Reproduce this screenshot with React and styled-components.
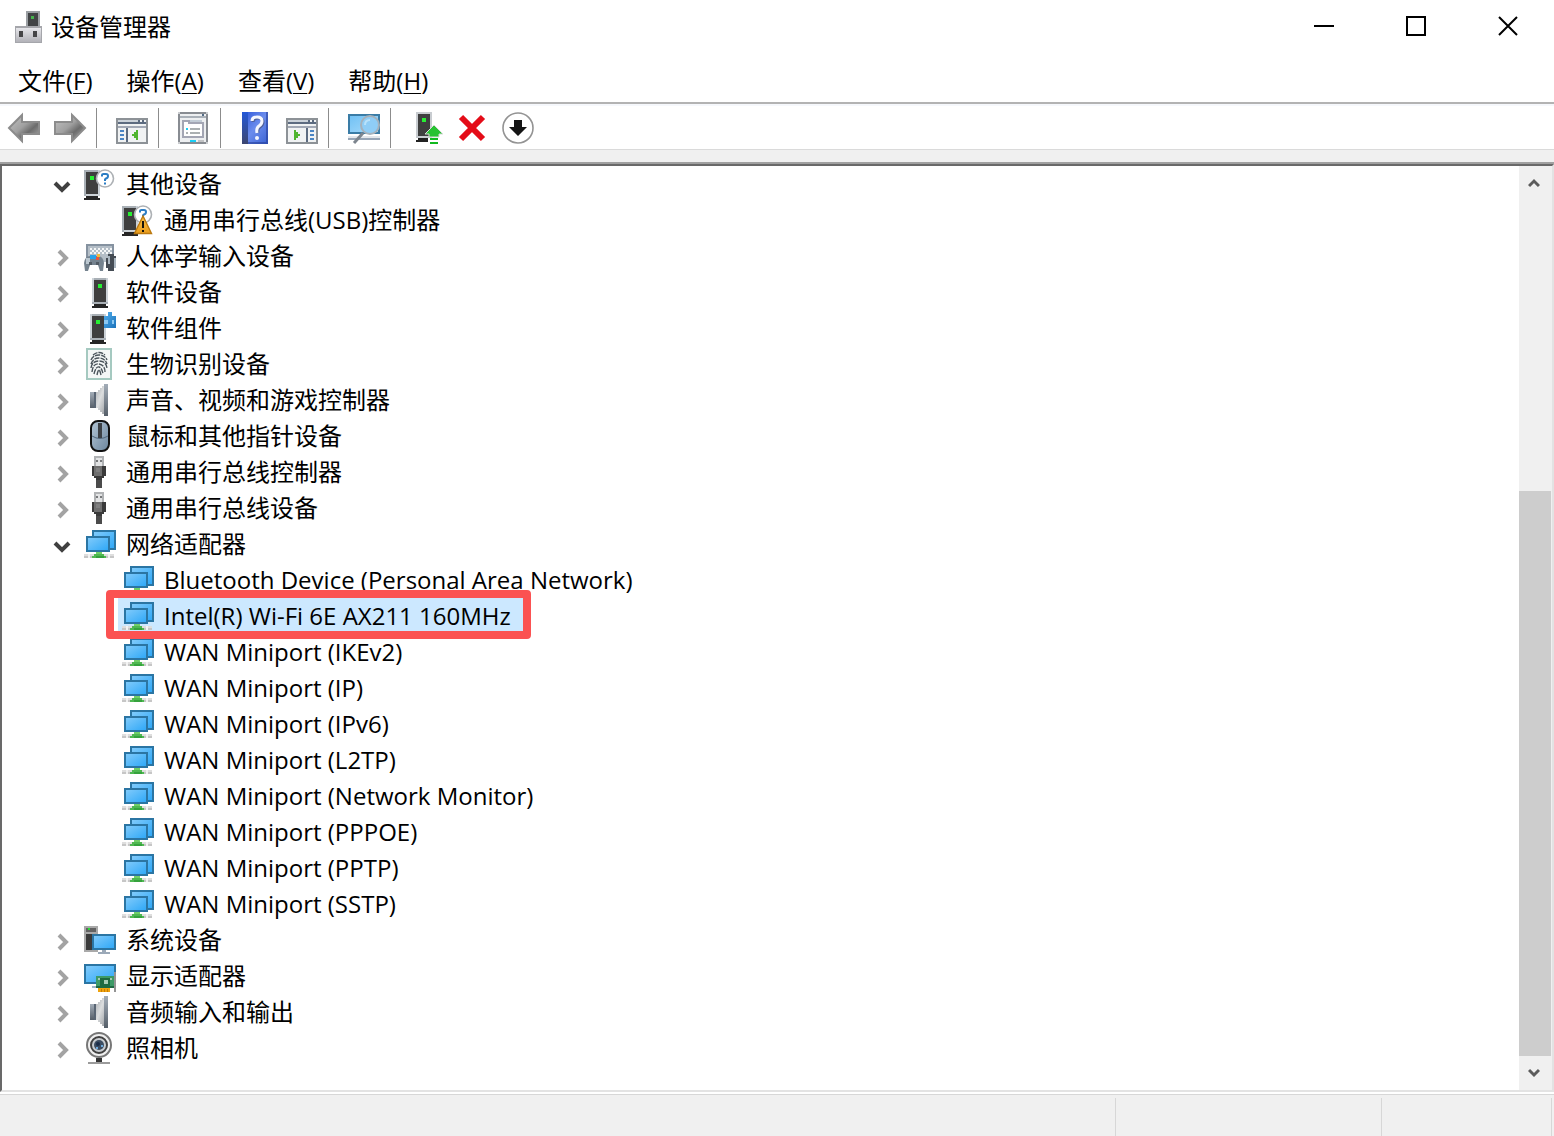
import React, { useState } from "react";
import styled, { createGlobalStyle } from "styled-components";

const GlobalStyle = createGlobalStyle`
  * {
    box-sizing: border-box;
  }
  body {
    margin: 0;
    background: #fff;
    color: #000;
    font-family: "Open Sans", "Noto Sans CJK SC", sans-serif;
    font-size: 24px;
    line-height: 36px;
  }
  button {
    font: inherit;
    color: inherit;
    background: none;
    border: none;
    padding: 0;
    margin: 0;
  }
`;

const menus = [
  { text: "文件", hotkey: "F" },
  { text: "操作", hotkey: "A" },
  { text: "查看", hotkey: "V" },
  { text: "帮助", hotkey: "H" },
];

const wanPorts = ["IKEv2", "IP", "IPv6", "L2TP", "Network Monitor", "PPPOE", "PPTP", "SSTP"];

const devices = [
  {
    name: "其他设备",
    icon: "other",
    open: true,
    children: [{ name: "通用串行总线(USB)控制器", icon: "warning" }],
  },
  { name: "人体学输入设备", icon: "hid" },
  { name: "软件设备", icon: "software" },
  { name: "软件组件", icon: "component" },
  { name: "生物识别设备", icon: "biometric" },
  { name: "声音、视频和游戏控制器", icon: "speaker" },
  { name: "鼠标和其他指针设备", icon: "mouse" },
  { name: "通用串行总线控制器", icon: "usb" },
  { name: "通用串行总线设备", icon: "usb" },
  {
    name: "网络适配器",
    icon: "network",
    open: true,
    children: [
      { name: "Bluetooth Device (Personal Area Network)", icon: "network" },
      { name: "Intel(R) Wi-Fi 6E AX211 160MHz", icon: "network", marked: true },
      ...wanPorts.map((port) => ({ name: `WAN Miniport (${port})`, icon: "network" })),
    ],
  },
  { name: "系统设备", icon: "system" },
  { name: "显示适配器", icon: "display" },
  { name: "音频输入和输出", icon: "speaker" },
  { name: "照相机", icon: "camera" },
];

const Gradients = () => (
  <Defs aria-hidden="true">
    <defs>
      <linearGradient id="screen" x1="0" y1="0" x2="1" y2="1">
        <stop offset="0" stopColor="#84ccfb" />
        <stop offset="1" stopColor="#2ba6f7" />
      </linearGradient>
      <linearGradient id="paleScreen" x1="0" y1="0" x2="1" y2="1">
        <stop offset="0" stopColor="#6fc0f4" />
        <stop offset="1" stopColor="#a9dcfb" />
      </linearGradient>
      <linearGradient id="arrow" x1="0" y1="0" x2="1" y2="1">
        <stop offset="0" stopColor="#c4c4c4" />
        <stop offset="0.45" stopColor="#a0a0a0" />
        <stop offset="0.65" stopColor="#6c6c6c" />
        <stop offset="1" stopColor="#b4b4b4" />
      </linearGradient>
      <linearGradient id="book" x1="0" y1="0" x2="1" y2="1">
        <stop offset="0" stopColor="#2c55d8" />
        <stop offset="0.5" stopColor="#6b8ced" />
        <stop offset="1" stopColor="#3a62d2" />
      </linearGradient>
      <linearGradient id="spine" x1="0" y1="0" x2="0" y2="1">
        <stop offset="0" stopColor="#2458d8" />
        <stop offset="1" stopColor="#3c4670" />
      </linearGradient>
      <linearGradient id="cone" x1="0" y1="0" x2="1" y2="1">
        <stop offset="0" stopColor="#a9adb1" />
        <stop offset="0.4" stopColor="#dcdedf" />
        <stop offset="0.7" stopColor="#b3b6b9" />
        <stop offset="1" stopColor="#777c82" />
      </linearGradient>
      <linearGradient id="rim" x1="0" y1="0" x2="0" y2="1">
        <stop offset="0" stopColor="#a3adb8" />
        <stop offset="1" stopColor="#565f69" />
      </linearGradient>
      <linearGradient id="shell" x1="0" y1="0" x2="1" y2="1">
        <stop offset="0" stopColor="#b4c6d6" />
        <stop offset="1" stopColor="#6b859d" />
      </linearGradient>
      <linearGradient id="case" x1="0" y1="0" x2="0" y2="1">
        <stop offset="0" stopColor="#e6e6ea" />
        <stop offset="1" stopColor="#b2b2b8" />
      </linearGradient>
      <linearGradient id="puzzle" x1="0" y1="0" x2="1" y2="1">
        <stop offset="0" stopColor="#52b0ee" />
        <stop offset="1" stopColor="#1c72ba" />
      </linearGradient>
      <linearGradient id="warn" x1="0" y1="0" x2="0" y2="1">
        <stop offset="0" stopColor="#f9c04a" />
        <stop offset="1" stopColor="#e99c1c" />
      </linearGradient>
    </defs>
  </Defs>
);

const Tower = ({ x }) => (
  <g transform={`translate(${x} 0)`} shapeRendering="crispEdges">
    <path fill="#ccd2d7" d="M0 2h16v26H0z" />
    <path fill="#a9b0b6" d="M2 2h12v2H2zM0 26h16v2H0z" />
    <path fill="#3f3f3f" d="M2 4h12v22H2z" />
    <path fill="#27ef33" d="M6 8h4v4H6z" />
    <path fill="#262626" d="M2 28h12v2H2zM0 30h16v2H0z" />
  </g>
);

const OtherTower = () => (
  <g shapeRendering="crispEdges">
    <path fill="#ccd2d7" d="M0 2h16v26H0z" />
    <path fill="#a9b0b6" d="M0 2h14v2H2v24H0z" />
    <path fill="#3f3f3f" d="M2 4h12v22H2z" />
    <path fill="#27ef33" d="M6 8h4v4H6z" />
    <path fill="#262626" d="M2 28h12v2H2zM0 30h16v2H0z" />
  </g>
);

const QuestionBadge = () => (
  <>
    <circle cx="21" cy="10.5" r="8.5" fill="#fff" stroke="#adb1b5" strokeWidth="1.6" />
    <path d="M18 8.5V7Q18 6 19.5 6H22Q24 6 24 8T22 10.5L21 11.5V13" fill="none" stroke="#2b7dc4" strokeWidth="2" />
    <path fill="#2b7dc4" d="M20 14.5h2v2h-2z" />
  </>
);

const Speaker = () => (
  <g shapeRendering="crispEdges">
    <path fill="url(#rim)" d="M6 8h6v16H6z" />
    <path fill="url(#cone)" d="M12 8h2V6h2V4h2V2h2V0h4v32h-4v-2h-2v-2h-2v-2h-2v-2h-2z" />
    <path fill="url(#rim)" d="M20 0h4v32h-4z" />
    <path fill="#5a6674" d="M10 8h2v16h-2z" />
  </g>
);

const UsbPlug = () => (
  <g shapeRendering="crispEdges">
    <path fill="#b0b2b4" d="M10 0h10v10H10z" />
    <path fill="#e2e3e4" d="M12 2h6v8h-6z" />
    <path fill="#77797b" d="M12 4h2v2h-2zM16 4h2v2h-2z" />
    <path fill="#3a3a3a" d="M8 10h14v10h-2v2h-2v2h-6v-2h-2v-2H8z" />
    <path fill="#6f6f6f" d="M10 10h8v10h-8z" />
    <path fill="#808080" d="M12 12h4v4h-4z" />
    <path fill="#4b4b4b" d="M12 24h6v8h-6z" />
  </g>
);

const deviceIcons = {
  other: (
    <>
      <OtherTower />
      <QuestionBadge />
    </>
  ),
  warning: (
    <>
      <OtherTower />
      <QuestionBadge />
      <path fill="url(#warn)" stroke="#bb7910" strokeWidth="1.4" d="M21 12L29.5 29.5H12.5z" />
      <path fill="#16120a" d="M20 17h2v7h-2zM20 26h2v2h-2z" />
    </>
  ),
  hid: (
    <>
      <path fill="#b4bec7" d="M2 4h28v18H2z" />
      <path fill="#8592a0" d="M2 4h28v2H2zM2 4h2v14H2zM28 4h2v12h-2z" />
      <path stroke="#f4f6f7" strokeWidth="2" strokeDasharray="2 2" d="M6 9H28M8 11H28M6 13H28" />
      <path fill="#75838f" d="M1 31L0 23Q1 16 6 16H14Q19 16 20 23L19 31H16L14 25H6L4 31z" />
      <path fill="#bcc8d1" d="M2 18h4v6H2z" />
      <path fill="#2aa2ea" d="M6 15h6v4H6z" />
      <path fill="#eb543d" d="M12 17h3v3h-3z" />
      <path fill="#f2b93b" d="M13 14h3v3h-3z" />
      <path fill="#515b64" d="M5 22h3v3H5zM12 22h3v3h-3z" />
      <path fill="#454c54" d="M22 18h2v-4h6v2h2v12h-2v3h-6v-3h-2z" />
      <path fill="#a9b5bf" d="M24 16h2v8h-2zM30 18h2v10h-2z" />
    </>
  ),
  software: <Tower x={8} />,
  component: (
    <g shapeRendering="crispEdges">
      <Tower x={6} />
      <path fill="url(#puzzle)" d="M20 4h4V0h4v4h4v12H20z" />
      <path fill="#8cc8f2" d="M20 8h4v4h-4zM28 8h2v4h-2z" />
    </g>
  ),
  biometric: (
    <>
      <path fill="#a5c9c0" d="M2 0h26v32H2z" />
      <path fill="#f5f7f7" d="M4 2h22v28H4z" />
      <g fill="none" stroke="#4b545c" strokeWidth="1.4" strokeDasharray="5 1">
        <path d="M9 7Q15 2 21 7M7 12Q9 7 15 7T23 12M7 16Q9 10 15 10T23 16M7 20Q8 13 15 13T23 20" />
        <path d="M8 24Q9 15 15 16T21 24M10 26Q12 18 15 19T19 26M13 27Q14 22 15 22T17 27" />
      </g>
    </>
  ),
  speaker: <Speaker />,
  mouse: (
    <>
      <rect x="7" y="1" width="18" height="30" rx="7" fill="url(#shell)" stroke="#111" strokeWidth="2" />
      <path stroke="#50667b" d="M8 16Q16 21 24 16" fill="none" />
      <path fill="#3c4045" d="M14 3h4v15h-4z" />
    </>
  ),
  usb: <UsbPlug />,
  network: (
    <g shapeRendering="crispEdges">
      <path fill="url(#screen)" stroke="#2b75a3" strokeWidth="2" d="M9 3H31V21H9z" />
      <path fill="url(#screen)" stroke="#2b75a3" strokeWidth="2" d="M3 9H25V23H3z" />
      <path fill="#dedede" d="M0 26h30v2H0z" />
      <path fill="#c6c6c6" d="M0 28h30v2H0z" />
      <path fill="#f2f2f2" d="M4 26h2v4H4zM24 26h2v4h-2z" />
      <path fill="#72cf68" d="M12 24h6v2h-6z" />
      <path fill="#4fb851" d="M10 26h10v2H10zM8 28h14v2H8z" />
      <path fill="#36a23d" d="M12 28h8v2h-8z" />
    </g>
  ),
  system: (
    <g shapeRendering="crispEdges">
      <path fill="#a9a9a9" d="M0 2h14v26H0z" />
      <path fill="#3a3a3a" d="M2 10h6v16H2z" />
      <path fill="#626262" d="M2 4h10v4H2z" />
      <path fill="#27dc33" d="M4 4h2v2H4z" />
      <path fill="url(#screen)" stroke="#2b75a3" strokeWidth="2" d="M9 11H31V25H9z" />
      <path fill="#9ba9b8" d="M18 26h4v2h-4zM14 28h12v2H14z" />
    </g>
  ),
  display: (
    <g shapeRendering="crispEdges">
      <path fill="url(#screen)" stroke="#2b75a3" strokeWidth="2" d="M1 5H31V23H1z" />
      <path fill="#a2b6ca" d="M8 26h6v2H8z" />
      <path fill="#3d9a67" d="M12 16h18v12H12z" />
      <path fill="#1e6a42" d="M16 18h10v8H16zM12 26h18v2H12z" />
      <path fill="#a4cbb4" d="M20 20h4v4h-4zM14 18h2v2h-2zM26 18h2v2h-2z" />
      <path fill="#949494" d="M30 12h2v20h-2z" />
      <path fill="#f0a30c" d="M14 28h12v4H14z" />
      <path stroke="#c67c07" d="M17 29V32M20 29V32M23 29V32" />
    </g>
  ),
  camera: (
    <>
      <circle cx="15" cy="13" r="12" fill="#efefef" stroke="#777" strokeWidth="2" />
      <circle cx="15" cy="13" r="8" fill="#c7cbcf" stroke="#414141" strokeWidth="2" />
      <circle cx="15" cy="13" r="5" fill="#3d4d61" />
      <circle cx="14" cy="12" r="2" fill="#1c2d49" />
      <path fill="#6eabde" d="M17 13h2v2h-2zM12 15h2v2h-2z" />
      <path fill="#333" d="M12 26h6v4h-6z" />
      <path fill="#9b9b9b" d="M4 30h22v2H4z" />
    </>
  ),
};

const toolGroups = [
  [
    {
      label: "后退",
      art: <path fill="url(#arrow)" stroke="#8c8c8c" strokeWidth="2" d="M1 16L14 3V10H31V22H14V29z" />,
    },
    {
      label: "前进",
      art: <path fill="url(#arrow)" stroke="#8c8c8c" strokeWidth="2" d="M31 16L18 3V10H1V22H18V29z" />,
    },
  ],
  [
    {
      label: "显示/隐藏控制台树",
      art: (
        <g shapeRendering="crispEdges">
          <path fill="#8d9297" d="M0 6h32v26H0z" />
          <path fill="#f0f2f3" d="M2 8h28v22H2z" />
          <path fill="#ccd3da" d="M2 8h20v2H2z" />
          <path fill="#5c6b80" d="M22 8h2v2h-2zM26 8h2v2h-2zM2 10h28v2H2zM10 16h2v14h-2z" />
          <path fill="#a2a9b6" d="M2 14h28v2H2z" />
          <path fill="#4b85c4" d="M4 18h4v2H4zM4 22h4v2H4zM4 26h4v2H4z" />
          <path fill="#50b52f" d="M20 18h2v10h-2v-2h-2v-2h-2v-2h2v-2h2z" />
        </g>
      ),
    },
  ],
  [
    {
      label: "属性",
      art: (
        <g shapeRendering="crispEdges">
          <path fill="#888c92" d="M0 0h30v32H0z" />
          <path fill="#c9cbce" d="M0 0h2v2H0zM28 0h2v2h-2zM0 30h2v2H0zM28 30h2v2h-2z" />
          <path fill="#edeff1" d="M2 2h26v28H2z" />
          <path fill="#a9b0b8" d="M2 4h26v2H2z" />
          <path fill="#526b86" d="M24 2h2v2h-2z" />
          <path fill="#a3a6b4" d="M4 8h8v2h14v16H4z" />
          <path fill="#c2ccd6" d="M12 8h12v2H12z" />
          <path fill="#fff" d="M6 10h4v2h14v12H6z" />
          <path fill="#a3a6b4" d="M12 10h2v2h-2zM18 10h2v2h-2z" />
          <path fill="#19cdf4" d="M8 16h2v2H8zM12 28h6v2h-6z" />
          <path fill="#abb0b2" d="M12 16h10v2H12zM12 20h10v2H12zM8 20h2v2H8z" />
          <path fill="#c2c3c5" d="M20 28h6v2h-6z" />
        </g>
      ),
    },
  ],
  [
    {
      label: "帮助",
      art: (
        <>
          <path fill="url(#book)" d="M2 0h26v32H2z" />
          <path fill="url(#spine)" d="M2 0h6v32H2z" />
          <path fill="#27409a" d="M8 30h20v2H8zM26 0h2v32h-2z" opacity="0.6" />
          <path fill="none" stroke="#51629b" strokeWidth="3" d="M13 10Q13 6 18 6T23 10Q23 13 20 15T18 21" />
          <path fill="none" stroke="#f4f6ff" strokeWidth="3" d="M12 9Q12 5 17 5T22 9Q22 12 19 14T17 21" />
          <circle cx="17" cy="26" r="2" fill="#f4f6ff" />
        </>
      ),
    },
    {
      label: "显示/隐藏操作窗格",
      art: (
        <g shapeRendering="crispEdges">
          <path fill="#8d9297" d="M0 6h32v26H0z" />
          <path fill="#f0f2f3" d="M2 8h28v22H2z" />
          <path fill="#ccd3da" d="M2 8h20v2H2z" />
          <path fill="#5c6b80" d="M22 8h2v2h-2zM26 8h2v2h-2zM2 10h28v2H2zM20 16h2v14h-2z" />
          <path fill="#a2a9b6" d="M2 14h28v2H2z" />
          <path fill="#4b85c4" d="M24 18h4v2h-4zM24 22h4v2h-4zM24 26h4v2h-4z" />
          <path fill="#50b52f" d="M8 18h2v2h2v2h2v2h-2v2h-2v2H8z" />
        </g>
      ),
    },
  ],
  [
    {
      label: "扫描检测硬件改动",
      art: (
        <>
          <path fill="url(#paleScreen)" stroke="#3a7ca6" strokeWidth="2" d="M1 3H31V21H1z" />
          <path fill="#e3e7ec" d="M0 24h32v2H0z" />
          <path fill="#96a5b6" d="M0 26h32v2H0z" />
          <path stroke="#7d858e" strokeWidth="3" d="M15 21L6 31" />
          <circle cx="22" cy="13" r="9" fill="#8fcdf6" stroke="#a5b1bb" strokeWidth="2" />
          <path fill="none" stroke="#b9e2fb" strokeWidth="2" d="M17 13Q17 8 22 8" />
        </>
      ),
    },
  ],
  [
    {
      label: "更新驱动程序",
      art: (
        <>
          <g shapeRendering="crispEdges">
            <path fill="#c8ccd0" d="M6 0h16v26H6z" />
            <path fill="#3f3f3f" d="M8 2h12v22H8z" />
            <path fill="#27ef33" d="M12 6h4v4h-4z" />
            <path fill="#222" d="M8 26h10v2H8zM6 28h12v2H6z" />
          </g>
          <path fill="#27c232" stroke="#d8dcd8" d="M24 13L33 22H29V25H19V22H15z" />
          <path fill="#12b91f" d="M20 26h8v2h-8zM20 30h8v2h-8z" />
        </>
      ),
    },
    {
      label: "卸载设备",
      art: <path stroke="#e40c18" strokeWidth="6" d="M5 5L27 27M27 5L5 27" />,
    },
    {
      label: "禁用设备",
      art: (
        <>
          <circle cx="16" cy="16" r="15" fill="#fff" stroke="#939393" strokeWidth="1.6" />
          <path fill="#151515" d="M12 8H20V15H25L16 24L7 15H12z" />
        </>
      ),
    },
  ],
];

const TreeNode = ({ node, depth, selected, onSelect }) => {
  const [open, setOpen] = useState(Boolean(node.open));
  const isSelected = selected === node.name;

  return (
    <li role="treeitem" aria-expanded={depth === 0 ? open : undefined} aria-selected={isSelected}>
      <Row $depth={depth}>
        {depth === 0 && (
          <Toggle aria-label={open ? "折叠" : "展开"} $open={open} onClick={() => setOpen(!open)}>
            <svg width="20" height="20" viewBox="0 0 20 20" fill="none" stroke="currentColor" strokeWidth="4">
              <path d={open ? "M3 7L10 14L17 7" : "M7 3L14 10L7 17"} />
            </svg>
          </Toggle>
        )}
        <NodeButton $selected={isSelected} onClick={() => onSelect(node.name)}>
          <Icon viewBox="0 0 32 32" aria-hidden="true">
            {deviceIcons[node.icon]}
          </Icon>
          {node.name}
          {node.marked && <Marker />}
        </NodeButton>
      </Row>
      {open && node.children && (
        <List role="group">
          {node.children.map((child) => (
            <TreeNode key={child.name} node={child} depth={depth + 1} selected={selected} onSelect={onSelect} />
          ))}
        </List>
      )}
    </li>
  );
};

export default function App() {
  const [selected, setSelected] = useState("Intel(R) Wi-Fi 6E AX211 160MHz");

  return (
    <Window>
      <GlobalStyle />
      <Gradients />
      <TitleBar>
        <Title>
          <Icon viewBox="0 0 32 32" aria-hidden="true">
            <path fill="#9b9fa3" d="M13 0h14v16H13z" />
            <path fill="#414345" d="M15 2h10v14H15z" />
            <path fill="#46b34d" d="M18 5h3v3h-3z" />
            <path fill="#a5a6ab" d="M2 15h27v17H2z" />
            <path fill="url(#case)" d="M3 17h25v14H3z" />
            <path fill="#454547" d="M6 20h4v6H6zM20 20h4v6h-4z" />
          </Icon>
          设备管理器
        </Title>
        <Controls>
          <ControlButton aria-label="最小化">
            <svg width="20" height="20">
              <path fill="#000" d="M0 9h20v2H0z" />
            </svg>
          </ControlButton>
          <ControlButton aria-label="最大化">
            <svg width="20" height="20">
              <path fill="none" stroke="#000" strokeWidth="2" d="M1 1H19V19H1z" />
            </svg>
          </ControlButton>
          <ControlButton aria-label="关闭">
            <svg width="20" height="20">
              <path stroke="#000" strokeWidth="2" d="M1 1L19 19M19 1L1 19" />
            </svg>
          </ControlButton>
        </Controls>
      </TitleBar>
      <MenuBar>
        {menus.map((menu) => (
          <MenuButton key={menu.hotkey}>
            {menu.text}(<u>{menu.hotkey}</u>)
          </MenuButton>
        ))}
      </MenuBar>
      <Toolbar>
        {toolGroups.map((group, i) => (
          <ToolGroup key={i}>
            {group.map((tool) => (
              <ToolButton key={tool.label} aria-label={tool.label}>
                <Icon viewBox="0 0 32 32">{tool.art}</Icon>
              </ToolButton>
            ))}
          </ToolGroup>
        ))}
      </Toolbar>
      <Panel>
        <Tree role="tree">
          {devices.map((device) => (
            <TreeNode key={device.name} node={device} depth={0} selected={selected} onSelect={setSelected} />
          ))}
        </Tree>
        <Scrollbar>
          <ScrollButton aria-label="向上滚动">
            <svg width="12" height="10" fill="none" stroke="#5c5c5c" strokeWidth="3">
              <path d="M1 8L6 3L11 8" />
            </svg>
          </ScrollButton>
          <Track />
          <Thumb />
          <ScrollButton aria-label="向下滚动">
            <svg width="12" height="10" fill="none" stroke="#5c5c5c" strokeWidth="3">
              <path d="M1 2L6 7L11 2" />
            </svg>
          </ScrollButton>
        </Scrollbar>
      </Panel>
      <StatusBar>
        <StatusMain />
        <StatusCell $width="266px" />
        <StatusCell $width="170px" />
      </StatusBar>
    </Window>
  );
}

const Window = styled.div`
  min-height: 100vh;
  display: flex;
  flex-direction: column;
  white-space: nowrap;
`;

const Defs = styled.svg`
  position: absolute;
  width: 0;
  height: 0;
`;

const Icon = styled.svg`
  width: 32px;
  height: 32px;
  flex: none;
  overflow: visible;
`;

const TitleBar = styled.header`
  height: 54px;
  display: flex;
  justify-content: space-between;
`;

const Title = styled.h1`
  display: flex;
  align-items: center;
  gap: 6px;
  margin: 0;
  padding-left: 13px;
  font-size: 24px;
  font-weight: 400;
`;

const Controls = styled.div`
  display: flex;
  height: 52px;
`;

const ControlButton = styled.button`
  width: 92px;
  display: flex;
  align-items: center;
  justify-content: center;
  &:hover {
    background: #e5e5e5;
  }
`;

const MenuBar = styled.nav`
  display: flex;
  height: 50px;
  padding: 6px 0 0 1px;
  border-bottom: 2px solid #b3b3b3;
`;

const MenuButton = styled.button`
  padding: 0 17px;
  u {
    text-decoration-thickness: 1px;
    text-underline-offset: 3px;
  }
`;

const Toolbar = styled.div`
  display: flex;
  height: 46px;
  padding: 2px 0 1px 1px;
  border-top: 2px solid #f6f8fc;
  border-bottom: 1px solid #dadada;
`;

const ToolGroup = styled.div`
  display: flex;
  & + & {
    margin-left: 3px;
    padding-left: 12px;
    border-left: 1px solid #8c8c8c;
  }
`;

const ToolButton = styled.button`
  width: 46px;
  display: flex;
  align-items: center;
  justify-content: center;
`;

const Panel = styled.main`
  flex: 1;
  display: flex;
  border-left: 2px solid #696969;
  border-right: 2px solid #e3e3e3;
  border-bottom: 2px solid #e3e3e3;
  border-top: 2px solid #696969;
  box-shadow: 0 -2px #a0a0a0, 0 -14px #f0f0f0;
  margin-top: 14px;
`;

const List = styled.ul`
  list-style: none;
  margin: 0;
  padding: 0;
`;

const Tree = styled(List)`
  flex: 1;
`;

const Row = styled.div`
  display: flex;
  height: 36px;
  padding-left: ${({ $depth }) => ($depth === 0 ? 46 : 116)}px;
`;

const Toggle = styled.button`
  width: 28px;
  margin-right: 4px;
  padding-top: 4px;
  display: flex;
  align-items: center;
  justify-content: center;
  color: ${({ $open }) => ($open ? "#404040" : "#a3a3a3")};
`;

const NodeButton = styled.button`
  position: relative;
  display: flex;
  align-items: center;
  gap: 10px;
  padding: 0 12px 0 4px;
  background: ${({ $selected }) => ($selected ? "#cce8ff" : "transparent")};
`;

const Marker = styled.span`
  position: absolute;
  z-index: 1;
  top: -8px;
  right: -8px;
  bottom: -5px;
  left: -12px;
  border: 8px solid #fb5252;
  border-radius: 4px;
  pointer-events: none;
`;

const Scrollbar = styled.div`
  width: 33px;
  display: flex;
  flex-direction: column;
  background: #f0f0f0;
`;

const ScrollButton = styled.button`
  height: 34px;
  padding-right: 3px;
  display: flex;
  align-items: center;
  justify-content: center;
`;

const Track = styled.div`
  flex: 34;
`;

const Thumb = styled.div`
  flex: 66;
  margin-right: 1px;
  background: #cdcdcd;
`;

const StatusBar = styled.footer`
  display: flex;
  height: 42px;
  margin-top: 2px;
  padding: 3px 2px 0 0;
  border-top: 1px solid #d7d7d7;
  background: #f0f0f0;
`;

const StatusMain = styled.div`
  flex: 1;
  border-right: 1px solid #d7d7d7;
`;

const StatusCell = styled.div`
  width: ${({ $width }) => $width};
  border-right: 1px solid #d7d7d7;
`;
